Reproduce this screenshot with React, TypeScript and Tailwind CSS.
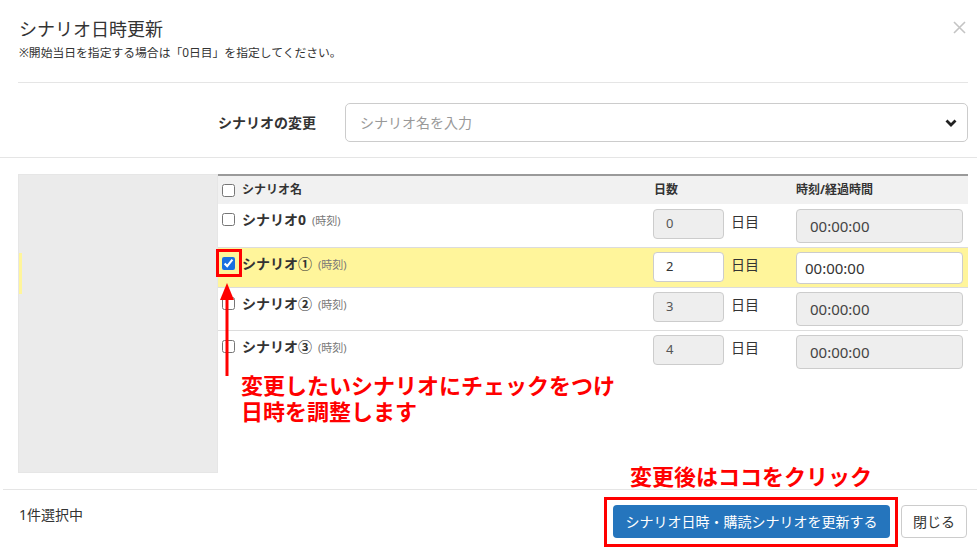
import React from "react";

const noop = () => {};

function Check({ checked = false }: { checked?: boolean }) {
  return (
    <input
      type="checkbox"
      checked={checked}
      onChange={noop}
      className="m-0 w-[13px] h-[13px] accent-[#1a6fe0] shrink-0"
    />
  );
}

type Row = { name: string; day: string; active: boolean; h: string; first?: boolean };

const rows: Row[] = [
  { name: "シナリオ0", day: "0", active: false, h: "h-[43px]", first: true },
  { name: "シナリオ①", day: "2", active: true, h: "h-[40px]" },
  { name: "シナリオ②", day: "3", active: false, h: "h-[43px]" },
  { name: "シナリオ③", day: "4", active: false, h: "h-[43px]" },
];

export default function App() {
  return (
    <div className="relative w-[977px] h-[549px] overflow-hidden bg-white text-[#333] font-['Noto_Sans','Noto_Sans_CJK_JP',sans-serif]">
      {/* Header */}
      <div className="relative h-[83px] ml-[18px] mr-[9px] border-b border-[#e5e5e5] pt-[17px]">
        <div className="text-[18px] leading-[24px] pl-[1px]">シナリオ日時更新</div>
        <div className="mt-[3px] text-[11.8px] leading-[16px] pl-[1px]">
          ※開始当日を指定する場合は「0日目」を指定してください。
        </div>
        <svg
          className="absolute right-[2px] top-[21px]"
          width="13"
          height="13"
          viewBox="0 0 13 13"
        >
          <path d="M1 1 L12 12 M12 1 L1 12" stroke="#c4c4c4" strokeWidth="1.6" />
        </svg>
      </div>

      {/* Scenario select row */}
      <div className="h-[75px] border-b border-[#e5e5e5] pt-[20px]">
        <div className="flex items-center h-[39px] pl-[218px] pr-[9px]">
          <div className="w-[127px] text-[14px] font-bold">シナリオの変更</div>
          <div className="flex-1 h-[39px] flex items-center justify-between border border-[#ccc] rounded-[5px] pl-[14px] pr-[10px]">
            <span className="text-[14px] text-[#999]">シナリオ名を入力</span>
            <svg width="12" height="8" viewBox="0 0 12 8">
              <path d="M1.5 1.5 L6 6 L10.5 1.5" stroke="#222" strokeWidth="2.8" fill="none" />
            </svg>
          </div>
        </div>
      </div>

      {/* Body */}
      <div className="flex pt-[16px] pb-[16px]">
        <div className="ml-[18px] w-[200px] h-[299px] bg-[#ebebeb] border border-[#e6e6e6]">
          <div className="mt-[78px] w-[3px] h-[41px] bg-[#fff59b]" />
        </div>
        <div className="w-[750px]">
          {/* table header */}
          <div className="flex items-center h-[30px] border-t-2 border-[#9a9a9a] bg-[#f1f1f1] text-[12px] font-bold">
            <div className="w-[435px] flex items-center pl-[4px] gap-[7px]">
              <Check />
              <span>シナリオ名</span>
            </div>
            <div className="w-[143px] pl-[1px]">日数</div>
            <div className="w-[172px]">時刻/経過時間</div>
          </div>
          {rows.map((r) => (
            <div
              key={r.name}
              className={`flex items-start ${r.h} ${r.first ? "" : "border-t border-[#dcdcdc]"} ${
                r.active ? "bg-[#fff59b]" : "bg-white"
              }`}
            >
              <div className="w-[435px] flex items-center pl-[4px] gap-[7px] h-[20px] mt-[5px]">
                <Check checked={r.active} />
                <span className="text-[14px] font-bold">
                  {r.name}
                  <span className="ml-[6px] text-[11px] font-normal text-[#777]">(時刻)</span>
                </span>
              </div>
              <div className={`w-[143px] flex items-start ${r.first ? "mt-[5px]" : "mt-[4px]"}`}>
                <div
                  className={`w-[71px] h-[30px] flex items-center pl-[12px] text-[13px] border border-[#ccc] rounded-[4px] ${
                    r.active ? "bg-white text-[#333]" : "bg-[#eeeeee] text-[#555]"
                  }`}
                >
                  {r.day}
                </div>
                <span className="ml-[7px] mt-[3px] text-[14px] leading-[20px]">日目</span>
              </div>
              <div className={`w-[172px] ${r.first ? "mt-[5px]" : "mt-[4px]"}`}>
                <div
                  className={`w-[167px] flex items-center text-[15px] border border-[#ccc] rounded-[4px] ${
                    r.active
                      ? "h-[32px] bg-white pl-[8px] text-[#333]"
                      : "h-[34px] bg-[#eeeeee] pl-[13px] text-[#444]"
                  }`}
                >
                  00:00:00
                </div>
              </div>
            </div>
          ))}
        </div>
      </div>

      {/* Footer */}
      <div className="ml-[3px] border-t border-[#e5e5e5] flex items-start justify-between pt-[15px] pl-[16px] pr-[10px]">
        <div className="text-[14px] leading-[20px]">1件選択中</div>
        <div className="flex gap-[11px]">
          <div className="w-[277px] h-[33px] rounded-[4px] bg-[#2575bd] text-white text-[14px] flex items-center justify-center">
            シナリオ日時・購読シナリオを更新する
          </div>
          <div className="w-[66px] h-[33px] rounded-[4px] border border-[#ccc] bg-white text-[14px] flex items-center justify-center">
            閉じる
          </div>
        </div>
      </div>

      {/* Annotations */}
      <div className="absolute left-[216px] top-[249px] w-[26px] h-[28px] border-[3px] border-[#ff0000]" />
      <svg className="absolute left-[219px] top-[283px]" width="16" height="94" viewBox="0 0 16 94">
        <polygon points="8,0 1,17 15,17" fill="#ff0000" />
        <rect x="6.5" y="15" width="3" height="78" fill="#ff0000" />
      </svg>
      <div className="absolute left-[241px] top-[372px] flex flex-col text-[22px] leading-[26px] font-bold text-[#ff0000]">
        <div>変更したいシナリオにチェックをつけ</div>
        <div>日時を調整します</div>
      </div>
      <div className="absolute left-[630px] top-[464px] text-[22px] leading-[25px] font-bold text-[#ff0000]">
        変更後はココをクリック
      </div>
      <div className="absolute left-[604px] top-[497px] w-[294px] h-[50px] border-[3px] border-[#ff0000]" />
    </div>
  );
}
